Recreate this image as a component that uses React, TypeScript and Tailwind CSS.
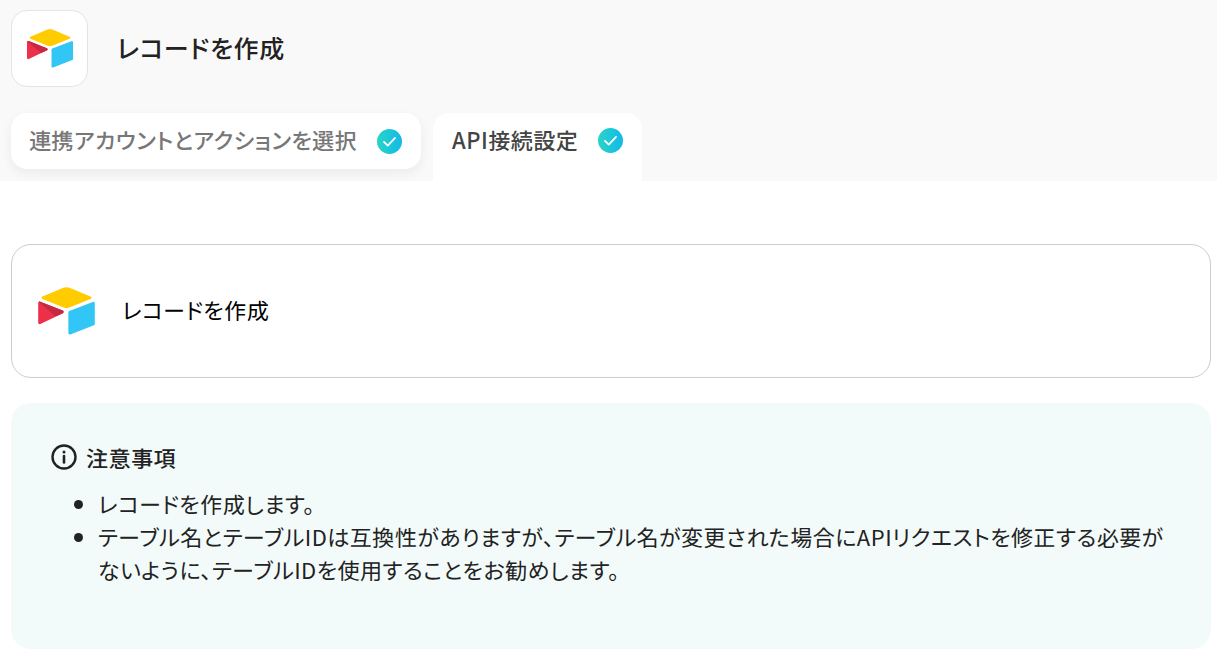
import React from 'react';

const fontStack = "font-['Noto_Sans_JP','Noto_Sans_CJK_JP',sans-serif]";

function AirtableLogo({ className }: { className: string }) {
  return (
    <svg viewBox="11 10 177 150" className={className}>
      <path fill="#ffcc00" d="M90.039 12.368 24.079 39.66c-3.667 1.519-3.63 6.729.062 8.192l66.235 26.266a24.58 24.58 0 0 0 18.12 0l66.236-26.266c3.69-1.463 3.73-6.673.062-8.192l-65.96-27.292a24.58 24.58 0 0 0-18.795 0" />
      <path fill="#31c6f6" d="M105.312 88.46v65.617c0 3.12 3.147 5.258 6.048 4.108l73.806-28.648a4.42 4.42 0 0 0 2.79-4.108V60.813c0-3.121-3.147-5.258-6.048-4.108l-73.806 28.648a4.42 4.42 0 0 0-2.79 4.108" />
      <path fill="#ed3049" d="M88.078 91.846l-21.904 10.576-2.224 1.075-46.238 22.155c-2.93 1.414-6.672-.722-6.672-3.978V60.088c0-1.178.604-2.195 1.414-2.96a5 5 0 0 1 1.12-.84c1.104-.663 2.68-.84 4.02-.31L87.71 83.76c3.564 1.414 3.844 6.408.368 8.087" />
      <path fill="#c62842" d="M88.078 91.846l-21.904 10.576-53.72-45.295a5 5 0 0 1 1.12-.84c1.104-.663 2.68-.84 4.02-.31L87.71 83.76c3.564 1.414 3.844 6.408.368 8.087" />
    </svg>
  );
}

function CheckBadge() {
  return (
    <span className="flex h-[25px] w-[25px] shrink-0 items-center justify-center rounded-full bg-gradient-to-r from-[#2bd4c4] to-[#12b9ea]">
      <svg viewBox="0 0 24 24" className="h-[19px] w-[19px]" fill="none" stroke="#fff" strokeWidth="2.2" strokeLinecap="round" strokeLinejoin="round">
        <path d="M5 12.5l4.8 4.8L19 7.5" />
      </svg>
    </span>
  );
}

export default function App() {
  return (
    <div className={`min-h-screen bg-white text-[#222] tracking-[0.5px] [font-feature-settings:'palt'] ${fontStack}`}>
      {/* Header */}
      <header className="h-[181px] bg-[#f9f9f9] px-[11px] pt-[10px]">
        <div className="flex items-center gap-[29px]">
          <div className="flex h-[77px] w-[77px] items-center justify-center rounded-[16px] border border-[#e4e4e4] bg-white">
            <AirtableLogo className="h-[39px] w-[46px]" />
          </div>
          <h1 className="-mt-[3px] text-[25px] leading-none font-medium tracking-[0.7px]">レコードを作成</h1>
        </div>

        {/* Tabs */}
        <div className="mt-[26px] flex items-start gap-[12px]">
          <div className="flex h-[56px] w-[410px] items-center justify-between rounded-[16px] bg-white pr-[19px] pl-[18px] shadow-[0_4px_12px_rgba(0,0,0,0.06)]">
            <span className="-mt-[4px] text-[22px] leading-none font-medium text-[#777]">連携アカウントとアクションを選択</span>
            <CheckBadge />
          </div>
          <div className="flex h-[68px] w-[209px] items-start justify-between rounded-t-[16px] bg-white pt-[15px] pr-[19px] pl-[19px]">
            <span className="-mt-[2px] text-[22px] leading-[26px] font-medium text-[#444]">API接続設定</span>
            <CheckBadge />
          </div>
        </div>
      </header>

      <main className="pr-[6px] pl-[11px]">
        {/* Action card */}
        <div className="mt-[63px] flex h-[134px] items-center gap-[27px] rounded-[20px] border border-[#ccc] bg-white pl-[26px]">
          <AirtableLogo className="h-[48px] w-[57px]" />
          <span className="-mt-[4px] text-[22px] leading-none text-black">レコードを作成</span>
        </div>

        {/* Notes */}
        <section className="mt-[25px] h-[246px] rounded-[20px] bg-[#f3fbfa] pt-[41px] pr-[40px] pl-[40px]">
          <div className="flex items-center gap-[9px]">
            <svg viewBox="0 0 26 26" className="h-[26px] w-[26px]" fill="none" stroke="#222" strokeWidth="2.4" strokeLinecap="round">
              <circle cx="13" cy="13" r="11.5" />
              <path d="M13 12v6.5" strokeWidth="2.6" />
              <circle cx="13" cy="8" r="1.5" fill="#222" stroke="none" />
            </svg>
            <h2 className="text-[22px] leading-none font-medium">注意事項</h2>
          </div>
          <ul className="mt-[17px] list-disc pl-[47px] text-[22px] leading-[33px]">
            <li>レコードを作成します。</li>
            <li>テーブル名とテーブルIDは互換性がありますが、テーブル名が変更された場合にAPIリクエストを修正する必要がないように、テーブルIDを使用することをお勧めします。</li>
          </ul>
        </section>
      </main>
    </div>
  );
}
